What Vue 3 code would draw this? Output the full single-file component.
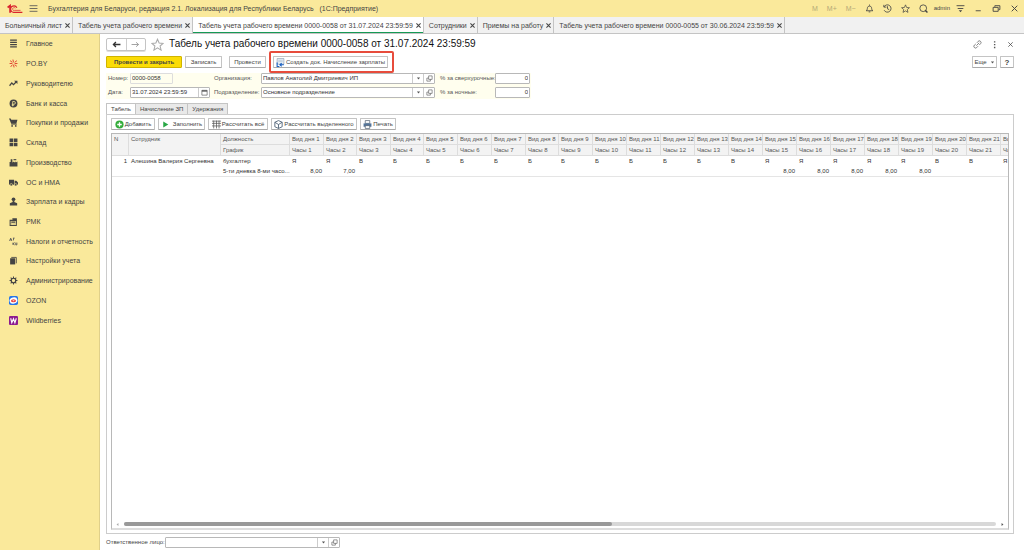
<script setup>
import { ref } from 'vue'

const icons = {
  logo: '<path d="M1 5.500 5 2.500V14" fill="none" stroke="#d9232e" stroke-width="2.800"/><path d="M16 6A5.300 5.300 0 1 0 12.500 13.400H25" fill="none" stroke="#d9232e" stroke-width="2"/><path d="M13.500 7A2.300 2.300 0 1 0 12.500 10.200H22" fill="none" stroke="#d9232e" stroke-width="1.200"/>',
  menu: '<path d="M1 3h14M1 8h14M1 13h14" fill="none" stroke="#555" stroke-width="1.500"/>',
  lines: '<path d="M2 2h12M2 6h12M2 10h12M2 14h12" fill="none" stroke="#444" stroke-width="2.200"/>',
  spark: '<path d="M8 6 7 1M10 8h5M6 8H1M8 10l1 5M10 6l4-3M6 6 2 3M6 10l-3 4M10 10l4 3" fill="none" stroke="#e0402e" stroke-width="1.700"/>',
  trend: '<path d="M1 12 5 7l3 3 5-5" fill="none" stroke="#444" stroke-width="2.200"/><path d="M9 3h6v6z" fill="#444"/>',
  coin: '<circle cx="8" cy="8" r="7" fill="#444"/><path d="M6.500 13V4.500H9a2.300 2.300 0 0 1 0 4.800H5M5 11h4" fill="none" stroke="#f9e99a" stroke-width="1.400"/>',
  cart: '<path d="M0 1h3l1 2h11l-2 7H4z" fill="#444"/><path d="M4 11h10" stroke="#444" stroke-width="1.500"/><circle cx="5.500" cy="14" r="1.600" fill="#444"/><circle cx="12" cy="14" r="1.600" fill="#444"/>',
  boxes: '<path d="M1 1h6.400v6H1zM8.600 1H15v6H8.600zM1 8.500h6.400v6H1zM8.600 8.500H15v6H8.600z" fill="#444"/>',
  factory: '<path d="M1 15V7h2V2h3v6l3-2v2l3-2v2l3-2v9z" fill="#444"/><path d="M8 3h5" stroke="#444" stroke-width="2"/>',
  truck: '<path d="M0 3h9v9H0zM10 5h3l3 3v4h-6z" fill="#444"/><circle cx="4" cy="12" r="2.200" fill="#444" stroke="#f9e99a"/><circle cx="12" cy="12" r="2.200" fill="#444" stroke="#f9e99a"/>',
  person: '<circle cx="8" cy="4" r="3.300" fill="#444"/><path d="M6.500 7h3v2l5 2v4h-13v-4l5-2z" fill="#444"/>',
  register: '<path d="M2 6h11v9H2z" fill="none" stroke="#444" stroke-width="1.800"/><path d="M6 5V2h8v9h-1V6zM4 8h7v2H4zM4 12h2v1H4zM8 12h2v1H8z" fill="#444"/>',
  percent: '<path d="M1 7 3 2l2 5M7 2h3M8 2v4M7 10v4M10 10l-3 2 3 2M12 10v4h2v-4M2 5h3" fill="none" stroke="#555" stroke-width="1.500"/>',
  books: '<path d="M2 4h9v11H2z" fill="#444"/><path d="M4 2.500h9V13" fill="none" stroke="#444" stroke-width="1.500"/>',
  gear: '<circle cx="8" cy="8" r="4" fill="none" stroke="#444" stroke-width="2.200"/><path d="M8 1v3M8 12v3M1 8h3M12 8h3M3 3l2 2M11 11l2 2M13 3l-2 2M5 11l-2 2" stroke="#444" stroke-width="1.800"/>',
  ozon: '<rect width="16" height="16" rx="3" fill="#2675e8"/><ellipse cx="8" cy="8" rx="7" ry="5.500" fill="#fff" transform="rotate(-15 8 8)"/><ellipse cx="8" cy="8.500" rx="4.500" ry="2.800" fill="#e8403c"/><ellipse cx="8" cy="8.500" rx="2" ry=".8" fill="#fff"/>',
  wb: '<rect width="16" height="16" rx="2" fill="#8d1b8f"/><path d="m3 4 2 8 3-7 2.500 7L13 4" fill="none" stroke="#fff" stroke-width="2"/>',
  bell: '<path d="M2 12c2-1 2-3 2.500-6 .5-3 6.500-3 7 0 .5 3 .5 5 2.500 6zM8 1v2M6.500 14h3" fill="none" stroke="#444" stroke-width="1.500"/>',
  history: '<path d="M2 5a6.500 6.500 0 1 1 0 6M1.500 1.500V5.500H6M8 4v4.500l3 1.500" fill="none" stroke="#444" stroke-width="1.500"/>',
  star: '<path d="m8 1.500 2 4.700 5 .4-3.800 3.300 1.200 5L8 12.200l-4.400 2.700 1.200-5L1 6.600l5-.4z" fill="none" stroke="currentColor" stroke-width="1.300"/>',
  search: '<circle cx="7.500" cy="7.500" r="6" fill="none" stroke="#444" stroke-width="1.500"/><path d="m11 11 4 4" stroke="#444" stroke-width="2.500"/>',
  filter: '<path d="M1 3h14M3 8h10" stroke="#444" stroke-width="1.600"/><path d="M5 11h6l-3 3.500z" fill="#444"/>',
  min: '<path d="M3 12h9" stroke="#444" stroke-width="1.600"/>',
  restore: '<path d="M2 6h9v7H2zM5 5V3h9v7h-2" fill="none" stroke="#444" stroke-width="1.600"/>',
  close: '<path d="m3 3 10 10M13 3 3 13" stroke="currentColor" stroke-width="1.700"/>',
  left: '<path d="M2 8h13M7 3.500 2.500 8 7 12.500" fill="none" stroke="#333" stroke-width="2.300"/>',
  right: '<path d="M1 8h12.500M9 4l4.500 4L9 12" fill="none" stroke="#999" stroke-width="1.600"/>',
  link: '<path d="M6 10l5-5M7 5l2-2.500a3 3 0 0 1 4.500 4L11 9M9 11l-2.500 2.500a3 3 0 0 1-4-4.500L5 7" fill="none" stroke="#666" stroke-width="1.400"/>',
  dots: '<path d="M7 2h2.500v2.500H7zM7 7h2.500v2.500H7zM7 12h2.500v2.500H7z" fill="#555"/>',
  doc: '<path d="M2 1h12v10H2z" fill="#e8f1fa" stroke="#7b8da0"/><path d="M4 4h8M4 6.500h8" stroke="#9fb3c8"/><path d="M2 8v7h4M14 12H7m3-3-3 3 3 3" fill="none" stroke="#1c62c4" stroke-width="2"/>',
  add: '<circle cx="8" cy="8" r="7.300" fill="#35ad3b"/><path d="M8 4v8M4 8h8" stroke="#fff" stroke-width="2.300"/>',
  play: '<path d="M4 2.500v11L13 8z" fill="#28a745"/>',
  grid: '<path d="M0 2h16M0 6h16M0 10.500h16M3 1v14M8 1v14M12.500 1v14" stroke="#555" stroke-width="1.300"/>',
  cube: '<path d="m8 1 6.500 3v8L8 15l-6.500-3V4zM1.500 4 8 8l6.500-4M8 8v7" fill="none" stroke="#465a70" stroke-width="1.500"/>',
  print: '<path d="M4 1h8v5H4z" fill="#fff" stroke="#456" stroke-width="1.200"/><path d="M1 6h14v6H1z" fill="#54759b"/><path d="M4 10h8v5H4z" fill="#fff" stroke="#456" stroke-width="1.200"/>',
  calendar: '<path d="M2 3h12v11H2z" fill="none" stroke="#555" stroke-width="1.500"/><path d="M2 3h12v3H2z" fill="#555"/>',
  open: '<path d="M6 2h8v8H6z" fill="none" stroke="#555" stroke-width="1.400"/><path d="M6 7H2v7h8v-4" fill="none" stroke="#555" stroke-width="1.400"/>',
  down: '<path d="M3 5h10l-5 6z" fill="#555"/>',
  arrowLeft: '<path d="M11 3v10L5 8z" fill="#aaa"/>',
  arrowRight: '<path d="M5 3v10l6-5z" fill="#555"/>'
}

const windows = [
  { title: 'Больничный лист' },
  { title: 'Табель учета рабочего времени' },
  { title: 'Табель учета рабочего времени 0000-0058 от 31.07.2024 23:59:59', active: true },
  { title: 'Сотрудники' },
  { title: 'Приемы на работу' },
  { title: 'Табель учета рабочего времени 0000-0055 от 30.06.2024 23:59:59' }
]

const sections = [
  ['lines', 'Главное'], ['spark', 'PO.BY'], ['trend', 'Руководителю'], ['coin', 'Банк и касса'],
  ['cart', 'Покупки и продажи'], ['boxes', 'Склад'], ['factory', 'Производство'], ['truck', 'ОС и НМА'],
  ['person', 'Зарплата и кадры'], ['register', 'РМК'], ['percent', 'Налоги и отчетность'],
  ['books', 'Настройки учета'], ['gear', 'Администрирование'], ['ozon', 'OZON'], ['wb', 'Wildberries']
]

const kinds = 'ЯЯВББББББББББВЯЯЯЯЯВВЯ'.split('')
const hours = { 1: '8,00', 2: '7,00', 15: '8,00', 16: '8,00', 17: '8,00', 18: '8,00', 19: '8,00' }
const narrow = [2, 4, 8]
const days = kinds.map((kind, i) => ({
  n: i + 1,
  kind,
  hours: hours[i + 1] || '',
  width: narrow.includes(i + 1) ? 33 : 34
}))

const number = ref('0000-0058')
const date = ref('31.07.2024 23:59:59')
const company = ref('Павлов Анатолий Дмитриевич ИП')
const department = ref('Основное подразделение')
const overtime = ref('0')
const night = ref('0')
const responsible = ref('')
</script>

<template>
  <div class="app">
    <header class="titlebar">
      <svg class="logo" viewBox="0 0 26 16" v-html="icons.logo"></svg>
      <button class="plain" aria-label="Меню"><svg class="ic" viewBox="0 0 16 16" v-html="icons.menu"></svg></button>
      <span class="app-title">Бухгалтерия для Беларуси, редакция 2.1. Локализация для Республики Беларусь &nbsp; (1С:Предприятие)</span>
      <div class="tools">
        <button class="plain mem">M</button>
        <button class="plain mem">M+</button>
        <button class="plain mem">M−</button>
        <button v-for="i in ['bell', 'history', 'star', 'search']" :key="i" class="plain" :aria-label="i"><svg class="ic" viewBox="0 0 16 16" v-html="icons[i]"></svg></button>
        <button class="plain user">admin</button>
        <button v-for="i in ['filter', 'min', 'restore', 'close']" :key="i" class="plain" :aria-label="i"><svg class="ic" viewBox="0 0 16 16" v-html="icons[i]"></svg></button>
      </div>
    </header>

    <nav class="windows">
      <div v-for="w in windows" :key="w.title" class="window" :class="{ active: w.active }">
        <a href="#">{{ w.title }}</a>
        <button class="plain" aria-label="Закрыть"><svg class="cross" viewBox="2 2 12 12"><path d="m3 3 10 10M13 3 3 13" stroke="#444" stroke-width="2.500" /></svg></button>
      </div>
    </nav>

    <div class="body">
      <nav class="sidebar">
        <div class="sections">
          <a v-for="[icon, label] in sections" :key="label" href="#">
            <svg class="ic" viewBox="0 0 16 16" v-html="icons[icon]"></svg>{{ label }}
          </a>
        </div>
      </nav>

      <main class="main">
        <div class="heading">
          <div class="history">
            <button aria-label="Назад"><svg class="ic" viewBox="0 0 16 16" v-html="icons.left"></svg></button>
            <button aria-label="Вперед"><svg class="ic" viewBox="0 0 16 16" v-html="icons.right"></svg></button>
          </div>
          <button class="plain fav" aria-label="В избранное"><svg viewBox="0 0 16 16" v-html="icons.star"></svg></button>
          <h1>Табель учета рабочего времени 0000-0058 от 31.07.2024 23:59:59</h1>
          <div class="heading-tools">
            <button class="plain" aria-label="Ссылка"><svg class="ic" viewBox="0 0 16 16" v-html="icons.link"></svg></button>
            <button class="plain" aria-label="Действия"><svg class="ic" viewBox="0 0 16 16" v-html="icons.dots"></svg></button>
            <button class="plain" aria-label="Закрыть"><svg class="x" viewBox="0 0 16 16" v-html="icons.close"></svg></button>
          </div>
        </div>

        <div class="commands">
          <button class="btn primary">Провести и закрыть</button>
          <button class="btn save">Записать</button>
          <button class="btn post">Провести</button>
          <div class="highlight">
            <button class="btn create"><svg class="ic" viewBox="0 0 16 16" v-html="icons.doc"></svg>Создать док. Начисление зарплаты</button>
          </div>
          <button class="btn more">Еще <svg class="caret" viewBox="0 0 16 16" v-html="icons.down"></svg></button>
          <button class="btn help">?</button>
        </div>

        <div class="fields">
          <label for="number">Номер:</label>
          <div class="field short readonly"><input id="number" v-model="number" readonly /></div>
          <label for="company">Организация:</label>
          <div class="field combo">
            <input id="company" v-model="company" />
            <button aria-label="Выбрать"><svg class="caret" viewBox="0 0 16 16" v-html="icons.down"></svg></button>
            <button aria-label="Открыть"><svg class="open" viewBox="0 0 16 16" v-html="icons.open"></svg></button>
          </div>
          <label for="overtime">% за сверхурочные:</label>
          <div class="field num"><input id="overtime" v-model="overtime" /></div>

          <label for="date">Дата:</label>
          <div class="field date">
            <input id="date" v-model="date" />
            <button aria-label="Календарь"><svg class="open" viewBox="0 0 16 16" v-html="icons.calendar"></svg></button>
          </div>
          <label for="department">Подразделение:</label>
          <div class="field combo">
            <input id="department" v-model="department" />
            <button aria-label="Выбрать"><svg class="caret" viewBox="0 0 16 16" v-html="icons.down"></svg></button>
            <button aria-label="Открыть"><svg class="open" viewBox="0 0 16 16" v-html="icons.open"></svg></button>
          </div>
          <label for="night">% за ночные:</label>
          <div class="field num"><input id="night" v-model="night" /></div>
        </div>

        <div class="pages" role="tablist">
          <button role="tab" class="page active">Табель</button>
          <button role="tab" class="page">Начисление ЗП</button>
          <button role="tab" class="page">Удержания</button>
        </div>

        <section class="panel">
          <div class="toolbar">
            <button class="btn b1"><svg class="ic" viewBox="0 0 16 16" v-html="icons.add"></svg>Добавить</button>
            <button class="btn b2"><svg class="ic" viewBox="0 0 16 16" v-html="icons.play"></svg>Заполнить</button>
            <button class="btn b3"><svg class="ic" viewBox="0 0 16 16" v-html="icons.grid"></svg>Рассчитать всё</button>
            <button class="btn b4"><svg class="ic" viewBox="0 0 16 16" v-html="icons.cube"></svg>Рассчитать выделенного</button>
            <button class="btn b5"><svg class="ic" viewBox="0 0 16 16" v-html="icons.print"></svg>Печать</button>
          </div>
          <div class="sheet">
            <div class="scroller">
              <table>
                <colgroup>
                  <col class="c-n" /><col class="c-name" /><col class="c-post" />
                  <col v-for="d in days" :key="d.n" :style="{ width: d.width + 'px' }" />
                </colgroup>
                <thead>
                  <tr>
                    <th rowspan="2">N</th>
                    <th rowspan="2">Сотрудник</th>
                    <th>Должность</th>
                    <th v-for="d in days" :key="d.n">Вид дня {{ d.n }}</th>
                  </tr>
                  <tr>
                    <th>График</th>
                    <th v-for="d in days" :key="d.n">Часы {{ d.n }}</th>
                  </tr>
                </thead>
                <tbody>
                  <tr>
                    <td class="r">1</td>
                    <td>Алешина Валерия Сергеевна</td>
                    <td>бухгалтер</td>
                    <td v-for="d in days" :key="d.n">{{ d.kind }}</td>
                  </tr>
                  <tr class="last">
                    <td></td>
                    <td></td>
                    <td>5-ти дневка 8-ми часо...</td>
                    <td v-for="d in days" :key="d.n" class="r">{{ d.hours }}</td>
                  </tr>
                </tbody>
              </table>
            </div>
            <div class="scrollbar">
              <svg class="sb" viewBox="0 0 16 16" v-html="icons.arrowLeft"></svg>
              <div class="track"><div class="thumb"></div></div>
              <svg class="sb" viewBox="0 0 16 16" v-html="icons.arrowRight"></svg>
            </div>
          </div>
        </section>

        <footer class="footer">
          <label for="responsible">Ответственное лицо:</label>
          <div class="field">
            <input id="responsible" v-model="responsible" />
            <button aria-label="Выбрать"><svg class="caret" viewBox="0 0 16 16" v-html="icons.down"></svg></button>
            <button aria-label="Открыть"><svg class="open" viewBox="0 0 16 16" v-html="icons.open"></svg></button>
          </div>
        </footer>
      </main>
    </div>
  </div>
</template>

<style>
body { margin: 0; background: #fff; }
</style>

<style scoped>
.app { display: flex; flex-direction: column; height: 100vh; overflow: hidden; font-family: "Liberation Sans", Arial, sans-serif; font-size: 7px; line-height: 9px; color: #444; }
.app * { box-sizing: border-box; }
button, input { font: inherit; color: inherit; margin: 0; }
button { padding: 0; white-space: nowrap; }
svg { flex: none; display: block; }
a { color: inherit; text-decoration: none; }
.plain { border: 0; background: none; display: flex; align-items: center; justify-content: center; }
.ic { width: 9px; height: 9px; }
.x { width: 7px; height: 7px; }
.cross { width: 5px; height: 5px; }
.caret { width: 5px; height: 5px; }
.open { width: 7px; height: 7px; }

.titlebar { flex: none; height: 17px; display: flex; align-items: center; background: #fae99b; padding: 0 5px 0 7px; }
.logo { width: 16px; height: 10px; margin-right: 6px; }
.app-title { margin-left: 10px; white-space: nowrap; }
.tools { margin-left: auto; display: flex; align-items: center; gap: 9px; }
.mem { color: #b5aa78; }
.user { font-size: 6px; margin: 0 -3px; }

.windows { flex: none; height: 17px; display: flex; background: #f1f1f1; border-bottom: 1px solid #c4c4c4; }
.window { display: flex; align-items: center; gap: 3px; padding: 0 2px 0 5px; border-right: 1px solid #c4c4c4; white-space: nowrap; }
.window.active { background: #fff; box-shadow: inset 0 -1px #169a55; }

.body { flex: 1; min-height: 0; display: flex; }
.sidebar { flex: none; width: 100px; background: #fae99b; border-right: 1px solid #e0d08a; }
.sections { height: 296px; display: flex; flex-direction: column; }
.sidebar a { flex: 1; display: flex; align-items: center; gap: 8px; padding-left: 9px; white-space: nowrap; }

.main { flex: 1; min-width: 0; display: flex; flex-direction: column; padding: 3px 10px 2px 6px; font-size: 6px; }
.heading { display: flex; align-items: center; height: 14px; }
.history { display: flex; width: 40px; height: 13px; border: 1px solid #c4c4c4; border-radius: 2px; box-shadow: 0 1px #ddd; }
.history button { flex: 1; border: 0; background: none; display: flex; align-items: center; justify-content: center; }
.history button + button { border-left: 1px solid #ccc; }
.fav { margin: 0 5px; color: #aaa; }
.fav svg { width: 13px; height: 13px; }
h1 { margin: 0; font-size: 10px; line-height: 14px; font-weight: 400; color: #111; white-space: nowrap; }
.heading-tools { margin-left: auto; display: flex; gap: 8px; }

.btn { height: 12px; display: flex; align-items: center; justify-content: center; gap: 1px; background: #fff; border: 1px solid #c4c4c4; border-bottom-color: #aaa; border-radius: 1px; }
.commands { display: flex; align-items: center; height: 22px; }
.primary { width: 76px; background: #fbdc06; border-color: #d0b400; font-weight: 700; }
.save { width: 37px; margin-left: 3px; }
.post { width: 37px; margin-left: 7px; }
.highlight { margin-left: 3px; padding: 3px 4px 3px 2px; border: 2px solid #e74c3c; border-radius: 2px; display: flex; }
.create { width: 115px; }
.more { width: 25px; margin-left: auto; gap: 3px; }
.help { width: 14px; margin-left: 3px; font-weight: 700; font-size: 8px; }

.fields { align-self: flex-start; display: grid; grid-template-columns: 22px 84px 47px 179px 55px 35px; row-gap: 3px; align-items: center; background: #fffeee; padding: 0 1px 1px 2px; white-space: nowrap; color: #555; }
.field { display: flex; height: 11px; background: #fff; border: 1px solid #b8b8b8; border-radius: 1px; color: #333; }
.field input { flex: 1; min-width: 0; width: 0; border: 0; padding: 0 1px; background: none; outline: 0; }
.field button { width: 11px; border: 0; border-left: 1px solid #ccc; background: none; display: flex; align-items: center; justify-content: center; }
.short { width: 43px; }
.date { width: 80px; }
.combo { width: 174px; }
.readonly { background: #fffeee; border-color: #ddd; }
.num input { text-align: right; }

.pages { display: flex; height: 11px; margin-top: 4px; }
.page { border: 1px solid #c4c4c4; border-bottom: 0; background: #e9e9e9; padding: 0 4px; }
.page + .page { border-left: 0; }
.page.active { background: #fff; }
.panel { flex: 1; min-height: 0; border: 1px solid #ccc; padding: 3px 4px; display: flex; flex-direction: column; }
.toolbar { display: flex; height: 12px; margin-bottom: 3px; gap: 3px; }
.b1 { width: 44px; }
.b2 { width: 47px; gap: 3px; }
.b3 { width: 60px; }
.b4 { width: 86px; }
.b5 { width: 36px; }
.sheet { flex: 1; min-height: 0; border: 1px solid #b8b8b8; border-bottom: 2px solid #ddd; display: flex; flex-direction: column; }
.scroller { flex: 1; min-height: 0; overflow: hidden; }
table { table-layout: fixed; width: 0; border-collapse: separate; border-spacing: 0; }
.c-n { width: 17px; }
.c-name { width: 92px; }
.c-post { width: 69px; }
th { height: 11px; padding: 0 2px; text-align: left; vertical-align: top; font-weight: 400; line-height: 10px; background: #f3f3f3; border-right: 1px solid #ddd; border-bottom: 1px solid #ddd; white-space: nowrap; color: #555; }
td { height: 10px; padding: 0 2px; white-space: nowrap; color: #333; }
.r { text-align: right; }
.last td { height: 11px; border-bottom: 1px solid #e5e5e5; }
.scrollbar { display: flex; align-items: center; height: 8px; gap: 4px; padding: 0 3px; }
.sb { width: 5px; height: 5px; }
.track { flex: 1; height: 4px; background: #d8d8d8; border-radius: 2px; }
.thumb { width: 56%; height: 4px; background: #999; border-radius: 2px; }

.footer { display: flex; align-items: center; margin-top: 3px; }
.footer label { width: 59px; white-space: nowrap; }
.footer .field { width: 175px; }
</style>
